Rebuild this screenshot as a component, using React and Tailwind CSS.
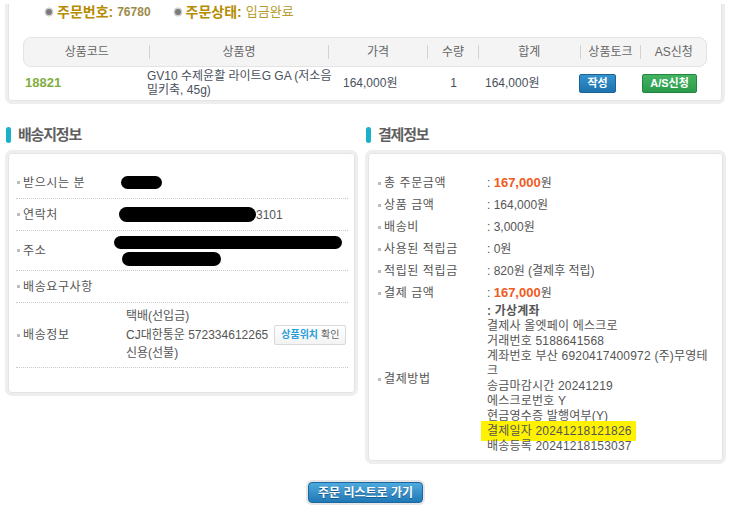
import React from "react";

const HEAD_COLS = [
  { label: "상품코드", w: "w-[126px]" },
  { label: "상품명", w: "w-[178px]" },
  { label: "가격", w: "w-[99px]" },
  { label: "수량", w: "w-[50px]" },
  { label: "합계", w: "w-[101px]" },
  { label: "상품토크", w: "w-[60px]" },
  { label: "AS신청", w: "w-[65px]" },
];

const PAY_ROWS = [
  { label: "총 주문금액", strong: "167,000" },
  { label: "상품 금액", value: "164,000원" },
  { label: "배송비", value: "3,000원" },
  { label: "사용된 적립금", value: "0원" },
  { label: "적립된 적립금", value: "820원 (결제후 적립)" },
  { label: "결제 금액", strong: "167,000" },
];

function Bullet() {
  return <span className="w-[3px] h-[3px] bg-[#bdbdbd] mr-[3px] shrink-0" />;
}

function Dot() {
  return (
    <span className="w-[6px] h-[6px] rounded-full bg-[#7a7a7a] ring-[1.5px] ring-[#d0d0d0] mr-[5px] shrink-0" />
  );
}

function Heading({ children }) {
  return (
    <div className="h-[20px] flex items-center gap-[7px] pl-[1px]">
      <span className="w-[5px] h-[16px] rounded-[3px] bg-[#19b1c9]" />
      <span className="text-[15px] font-bold tracking-[-1.2px] text-[#5f5f5f]">{children}</span>
    </div>
  );
}

function Box({ className = "", children }) {
  return (
    <div
      className={`border-[3px] border-[#eeeeee] rounded-[7px] bg-white shadow-[inset_0_0_0_1px_#e4e4e4] ${className}`}
    >
      {children}
    </div>
  );
}

function Blob({ className }) {
  return <span className={`block bg-black rounded-full ${className}`} />;
}

function ShipRow({ label, h, children }) {
  return (
    <div className={`flex items-center border-b border-dotted border-[#c9c9c9] ${h}`}>
      <div className="w-[110px] flex items-center pl-[1px] shrink-0">
        <Bullet />
        <span className="tracking-[0.6px]">{label}</span>
      </div>
      <div className="flex-1">{children}</div>
    </div>
  );
}

export default function App() {
  return (
    <div className="w-[736px] h-[509px] overflow-hidden bg-white text-[12px] text-[#555] font-['Liberation_Sans','Noto_Sans_CJK_KR',sans-serif]">
      {/* ORDER SUMMARY */}
      <div className="ml-[5px] w-[720px] border-[3px] border-t-0 border-[#eeeeee] rounded-b-[7px] bg-white shadow-[inset_0_-1px_0_0_#e4e4e4,inset_1px_0_0_0_#e4e4e4,inset_-1px_0_0_0_#e4e4e4] px-[15px] pb-[2px]">
        <div className="h-[16px] mt-[4px] flex items-center pl-[23px]">
          <Dot />
          <span className="text-[14px] font-bold text-[#b68c00]">주문번호:</span>
          <span className="ml-[4px] text-[12px] font-bold text-[#9d8a48]">76780</span>
          <span className="ml-[24px] flex items-center">
            <Dot />
            <span className="text-[14px] font-bold text-[#b68c00]">주문상태:</span>
            <span className="ml-[4px] text-[13px] text-[#b79b2c]">입금완료</span>
          </span>
        </div>

        <div className="mt-[17px] h-[30px] flex items-center bg-[#f4f4f4] border border-[#e3e3e3] rounded-[8px] text-[#666]">
          {HEAD_COLS.map((c, i) => (
            <React.Fragment key={c.label}>
              {i > 0 && <span className="w-px h-[14px] bg-[#d3d3d3]" />}
              <div className={`${c.w} text-center`}>{c.label}</div>
            </React.Fragment>
          ))}
        </div>

        <div className="h-[32px] flex items-center text-[#4a505c]">
          <div className="w-[124px] pl-[2px] font-bold text-[13px] text-[#7fae3f]">18821</div>
          <div className="w-[196px] leading-[14px]">GV10 수제윤활 라이트G GA (저소음 밀키축, 45g)</div>
          <div className="w-[85px]">164,000원</div>
          <div className="w-[51px] text-center">1</div>
          <div className="w-[100px] pl-[6px]">164,000원</div>
          <div className="w-[63px]">
            <span className="inline-flex items-center justify-center w-[37px] h-[19px] rounded-[2px] border border-[#1c6497] bg-gradient-to-b from-[#3394cf] to-[#1e72ad] text-white text-[11px] font-bold">
              작성
            </span>
          </div>
          <div className="w-[65px]">
            <span className="inline-flex items-center justify-center w-[55px] h-[19px] rounded-[2px] border border-[#25843f] bg-gradient-to-b from-[#43b462] to-[#2a9a4c] text-white text-[11px] font-bold">
              A/S신청
            </span>
          </div>
        </div>
      </div>

      {/* PANELS */}
      <div className="flex items-start gap-[7px] pl-[5px] mt-[21px]">
        {/* SHIPPING */}
        <div className="w-[353px]">
          <Heading>배송지정보</Heading>
          <Box className="mt-[5px] pt-[14px] pl-[8px] pr-[7px] pb-[25px]">
            <ShipRow label="받으시는 분" h="h-[32px]">
              <Blob className="w-[41px] h-[13px] -ml-[5px]" />
            </ShipRow>
            <ShipRow label="연락처" h="h-[32px]">
              <div className="flex items-center -ml-[7px]">
                <Blob className="w-[137px] h-[15px]" />
                <span>3101</span>
              </div>
            </ShipRow>
            <ShipRow label="주소" h="h-[40px]">
              <div className="-ml-[12px] flex flex-col gap-[3px]">
                <Blob className="w-[228px] h-[13px]" />
                <Blob className="w-[99px] h-[14px] ml-[8px]" />
              </div>
            </ShipRow>
            <ShipRow label="배송요구사항" h="h-[32px]" />
            <ShipRow label="배송정보" h="h-[65px]">
              <div className="leading-[17px]">
                <div>택배(선입금)</div>
                <div className="flex items-center whitespace-nowrap">
                  <span>CJ대한통운 572334612265</span>
                  <span className="ml-[6px] inline-flex items-center h-[20px] px-[6px] border border-[#d9d9d9] rounded-[2px] bg-gradient-to-b from-white to-[#f3f3f3] text-[10px] leading-none">
                    <span className="font-bold text-[#2a9fd8]">상품위치</span>
                    <span className="ml-[3px] text-[#666]">확인</span>
                  </span>
                </div>
                <div>신용(선불)</div>
              </div>
            </ShipRow>
          </Box>
        </div>

        {/* PAYMENT */}
        <div className="w-[361px]">
          <Heading>결제정보</Heading>
          <Box className="mt-[5px] pt-[19px] pl-[10px] pr-[6px] pb-[7px]">
            {PAY_ROWS.map((r) => (
              <div key={r.label} className="h-[22px] flex items-center">
                <div className="w-[109px] flex items-center shrink-0">
                  <Bullet />
                  <span className="tracking-[0.6px]">{r.label}</span>
                </div>
                <div>
                  {r.strong ? (
                    <>
                      : <span className="text-[13px] font-bold text-[#f15a22]">{r.strong}</span>원
                    </>
                  ) : (
                    <>: {r.value}</>
                  )}
                </div>
              </div>
            ))}
            <div className="flex items-center">
              <div className="w-[109px] flex items-center shrink-0">
                <Bullet />
                <span className="tracking-[0.6px]">결제방법</span>
              </div>
              <div className="w-[222px] leading-[15px] tracking-[0.2px]">
                <div className="font-bold">: 가상계좌</div>
                <div>결제사 올엣페이 에스크로</div>
                <div>거래번호 5188641568</div>
                <div>계좌번호 부산 6920417400972 (주)무영테크</div>
                <div>송금마감시간 20241219</div>
                <div>에스크로번호 Y</div>
                <div>현금영수증 발행여부(Y)</div>
                <div>
                  <span className="bg-[#fff200] -ml-[6px] pl-[6px] pr-[4px] py-[3px]">결제일자 20241218121826</span>
                </div>
                <div>배송등록 20241218153037</div>
              </div>
            </div>
          </Box>
        </div>
      </div>

      {/* BACK BUTTON */}
      <div className="mt-[16px] flex justify-center pr-[5px]">
        <div className="p-[2px] rounded-[6px] bg-[#e6e6e6]">
          <div className="h-[21px] px-[9px] flex items-center rounded-[4px] border border-[#1b679f] bg-gradient-to-b from-[#4eaade] to-[#1f78b6] text-white text-[12px] font-bold [text-shadow:0_1px_0_#185a8a]">
            주문 리스트로 가기
          </div>
        </div>
      </div>
    </div>
  );
}
